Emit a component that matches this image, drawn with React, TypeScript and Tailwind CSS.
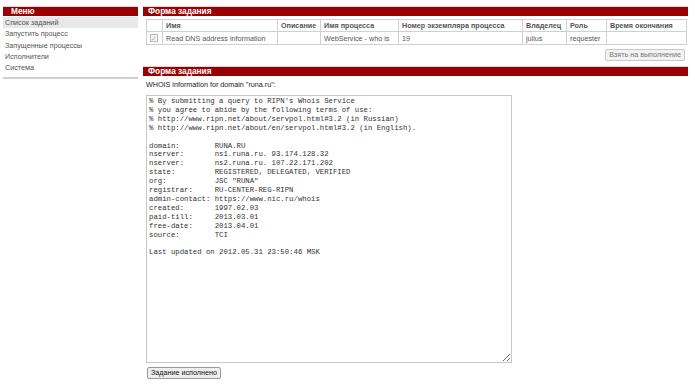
import React from 'react';

const whois = `% By submitting a query to RIPN's Whois Service
% you agree to abide by the following terms of use:
% http://www.ripn.net/about/servpol.html#3.2 (in Russian)
% http://www.ripn.net/about/en/servpol.html#3.2 (in English).

domain:        RUNA.RU
nserver:       ns1.runa.ru. 93.174.128.32
nserver:       ns2.runa.ru. 107.22.171.202
state:         REGISTERED, DELEGATED, VERIFIED
org:           JSC "RUNA"
registrar:     RU-CENTER-REG-RIPN
admin-contact: https://www.nic.ru/whois
created:       1997.02.03
paid-till:     2013.03.01
free-date:     2013.04.01
source:        TCI

Last updated on 2012.05.31 23:50:46 MSK`;

const menu = ['Список заданий', 'Запустить процесс', 'Запущенные процессы', 'Исполнители', 'Система'];

const cols = [
  { title: '', w: 'w-[16px]' },
  { title: 'Имя', w: 'w-[115px]' },
  { title: 'Описание', w: 'w-[43px]' },
  { title: 'Имя процесса', w: 'w-[78px]' },
  { title: 'Номер экземпляра процесса', w: 'w-[124px]' },
  { title: 'Владелец', w: 'w-[44px]' },
  { title: 'Роль', w: 'w-[40px]' },
  { title: 'Время окончания', w: 'w-[80px]' },
];

const row = ['Read DNS address information', '', 'WebService - who is', '19', 'julius', 'requester', ''];

const Header: React.FC<{ title: string; pad?: string }> = ({ title, pad = 'pl-[5px]' }) => (
  <div className={`h-[10px] bg-[#990000] border-t border-[#d8d8d8] text-white font-bold text-[8.3px] leading-[9px] ${pad}`}>
    {title}
  </div>
);

export default function App() {
  return (
    <div className="w-[695px] h-[388px] bg-white overflow-hidden flex pt-[6px] pl-[3px] text-[7.2px] text-[#444]" style={{ fontFamily: '"Liberation Sans", Arial, sans-serif' }}>
      <div className="w-[135px] shrink-0">
        <Header title="Меню" pad="pl-[8px]" />
        <div className="mt-[1px]">
          {menu.map((m, i) => (
            <div key={m} className={`h-[11.25px] leading-[11.25px] pl-[2px] text-[#555] ${i === 0 ? 'bg-[#e8e8e8]' : ''}`}>
              {m}
            </div>
          ))}
        </div>
        <div className="mt-[4px] h-[2px] bg-[#cfcfcf]" />
      </div>

      <div className="w-[545px] ml-[5px] shrink-0">
        <Header title="Форма задания" />
        <table className="mt-[3px] ml-[3px] w-[540px] border-collapse table-fixed">
          <thead>
            <tr className="h-[12px]">
              {cols.map((c, i) => (
                <th key={i} className={`${c.w} border border-[#d0d0d0] text-left font-bold text-[#555] px-[3px] py-0 leading-[10px] whitespace-nowrap`}>
                  {c.title}
                </th>
              ))}
            </tr>
          </thead>
          <tbody>
            <tr className="h-[13px]">
              <td className="border border-[#d0d0d0] px-[3px]">
                <div className="w-[8px] h-[8px] border border-[#bbb] bg-[#f4f4f4] flex items-center justify-center text-[7px] leading-none text-[#aaa]">✓</div>
              </td>
              {row.map((r, i) => (
                <td key={i} className="border border-[#d0d0d0] px-[3px] text-[#555] whitespace-nowrap overflow-hidden leading-[11px]">
                  {r}
                </td>
              ))}
            </tr>
          </tbody>
        </table>
        <div className="flex justify-end mt-[4px] pr-[3px]">
          <button className="h-[12px] px-[3px] border border-[#c8c8c8] rounded-[2px] bg-[#f3f3f3] text-[#777] text-[7.2px] leading-[10px]">
            Взять на выполнение
          </button>
        </div>
        <div className="mt-[5px]">
          <Header title="Форма задания" />
        </div>
        <div className="ml-[3px] mt-[3px] text-[#222] leading-[11px]">WHOIS information for domain "runa.ru":</div>
        <textarea
          readOnly
          defaultValue={whois}
          className="block mt-[5px] ml-[3px] w-[366px] h-[268px] border border-[#c8c8c8] px-[2px] pt-[1px] text-[7.3px] leading-[8.9px] text-[#333] outline-none resize-y"
          style={{ fontFamily: '"Liberation Mono", "Courier New", monospace' }}
        />
        <button className="mt-[4px] ml-[4px] h-[12px] px-[3px] border border-[#999] rounded-[2px] bg-[#eee] text-[#111] text-[7.2px] leading-[10px]">
          Задание исполнено
        </button>
      </div>
    </div>
  );
}
